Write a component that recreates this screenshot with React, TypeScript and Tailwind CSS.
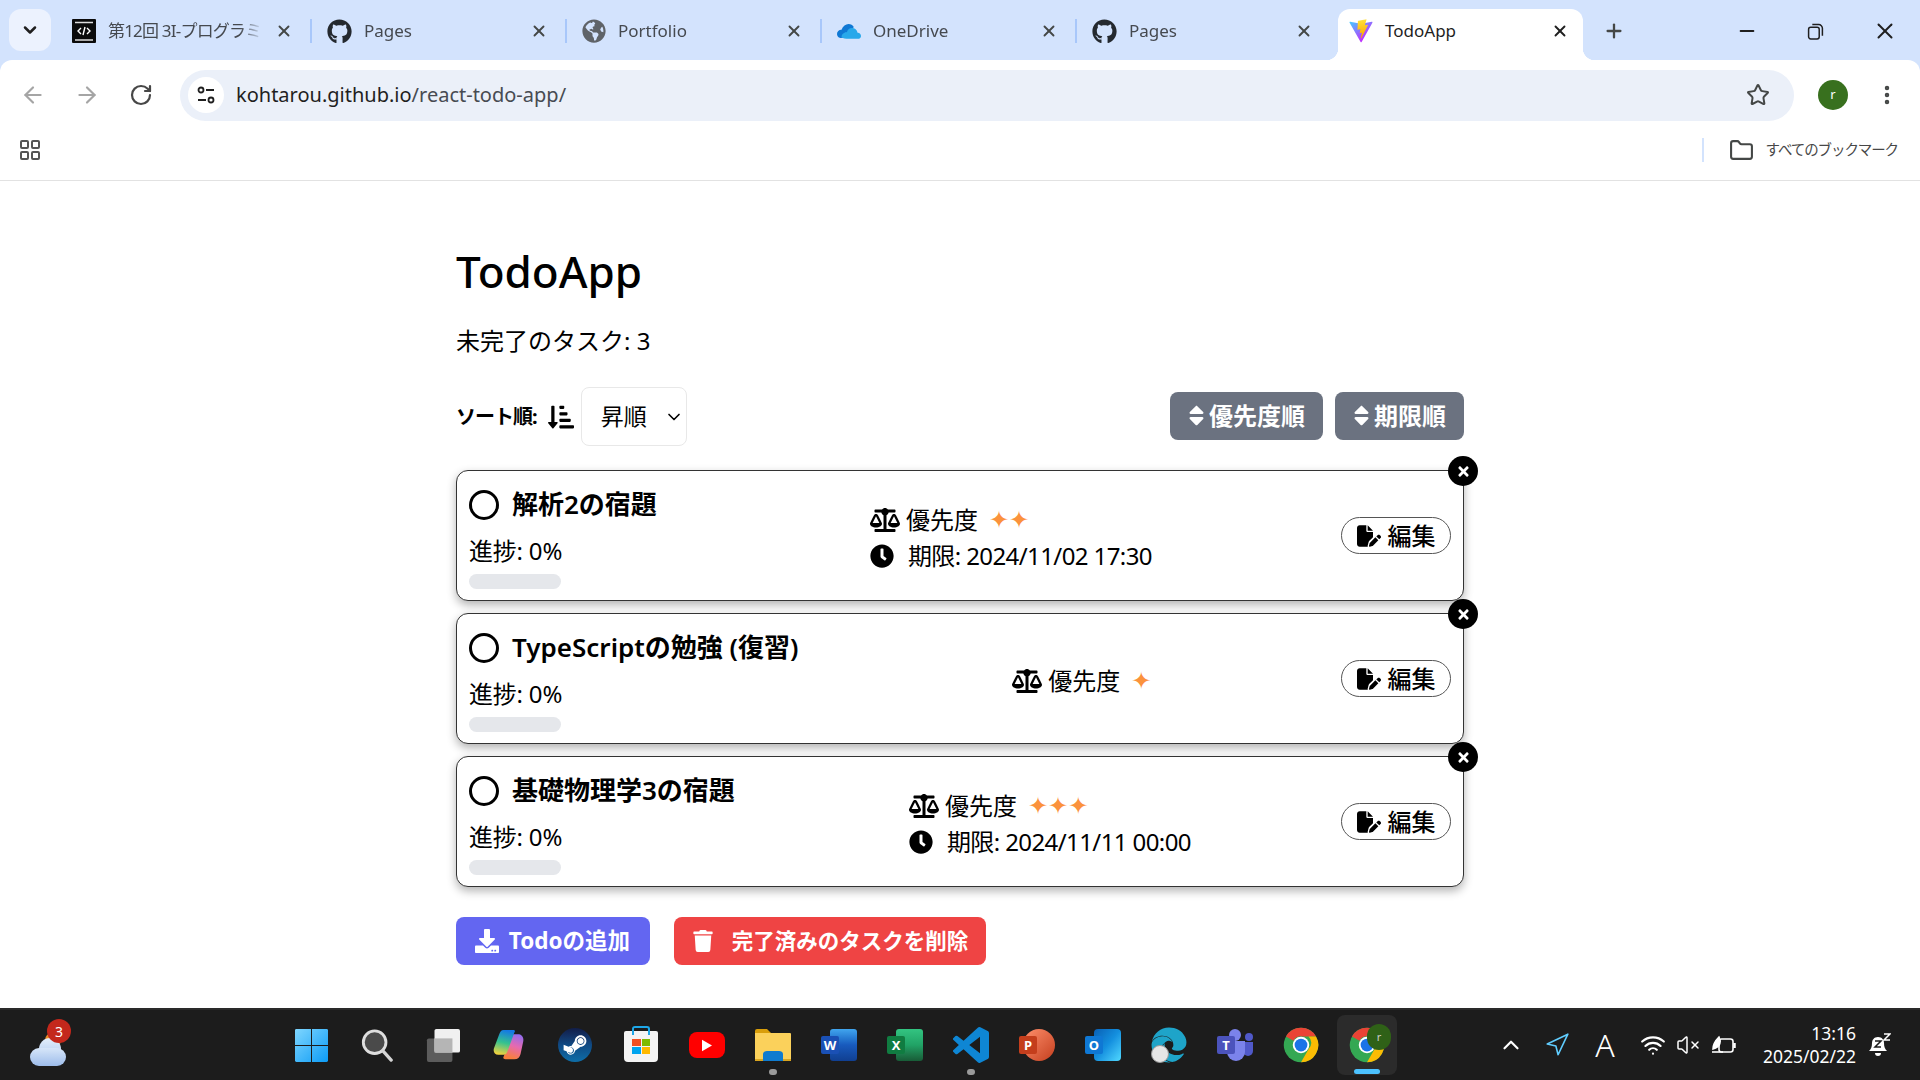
import { ArrowLeft, ArrowRight, ChevronDown, ChevronUp, EllipsisVertical, Folder, LayoutGrid, Minus, Navigation, Plus, RotateCw, Star, VolumeX, Wifi, X } from 'lucide-react';
import { FaBalanceScale, FaClock, FaDownload, FaEdge, FaGithub, FaGlobeAmericas, FaSort, FaSortAmountDownAlt, FaSteamSymbol, FaTimes, FaTrash } from 'react-icons/fa';
import { FaFilePen } from 'react-icons/fa6';
import type { ReactNode } from 'react';

const tasks = [
  { title: '解析2の宿題', stars: '✦✦', due: '期限: 2024/11/02 17:30' },
  { title: 'TypeScriptの勉強 (復習)', stars: '✦', due: '' },
  { title: '基礎物理学3の宿題', stars: '✦✦✦', due: '期限: 2024/11/11 00:00' },
];

function ViteLogo() {
  return (
    <svg viewBox="0 0 410 404" className="w-6 h-6 shrink-0">
      <defs>
        <linearGradient id="vite1" x1="6" y1="33" x2="235" y2="344" gradientUnits="userSpaceOnUse">
          <stop stopColor="#41D1FF" />
          <stop offset="1" stopColor="#BD34FE" />
        </linearGradient>
        <linearGradient id="vite2" x1="194" y1="8" x2="236" y2="293" gradientUnits="userSpaceOnUse">
          <stop stopColor="#FFEA83" />
          <stop offset="0.08" stopColor="#FFDD35" />
          <stop offset="1" stopColor="#FFA800" />
        </linearGradient>
      </defs>
      <path fill="url(#vite1)" d="M399.641 59.5246L215.643 388.545C211.844 395.338 202.084 395.378 198.228 388.618L10.5817 59.5563C6.38087 52.1896 12.6802 43.2665 21.0281 44.7586L205.223 77.6824C206.398 77.8924 207.601 77.8904 208.776 77.6763L389.119 44.8058C397.439 43.2894 403.768 52.1434 399.641 59.5246Z" />
      <path fill="url(#vite2)" d="M292.965 1.5744L156.801 28.2552C154.563 28.6937 152.906 30.5903 152.771 32.8664L144.395 174.33C144.198 177.662 147.258 180.248 150.51 179.498L188.42 170.749C191.967 169.931 195.172 173.055 194.443 176.622L183.18 231.775C182.422 235.487 185.907 238.661 189.532 237.56L212.947 230.446C216.577 229.344 220.065 232.527 219.297 236.242L201.398 322.875C200.278 328.294 207.486 331.249 210.492 326.603L212.5 323.5L323.454 102.072C325.312 98.3645 322.108 94.137 318.036 94.9228L279.014 102.454C275.347 103.161 272.227 99.746 273.262 96.1583L298.731 7.86689C299.767 4.27314 296.636 0.855181 292.965 1.5744Z" />
    </svg>
  );
}

function CodeFavicon() {
  return (
    <svg viewBox="0 0 24 24" className="w-6 h-6 shrink-0">
      <rect width="24" height="24" rx="1" fill="#0b0b0b" />
      <path d="M3 3.5h18M3 21h18" stroke="#ddd" strokeWidth="1.5" />
      <path d="M9 9l-3 3 3 3M15 9l3 3-3 3M13 8l-2 8" stroke="#fff" strokeWidth="1.4" fill="none" />
    </svg>
  );
}

function OneDriveLogo() {
  return (
    <svg viewBox="0 0 24 16" className="w-6 h-4 shrink-0">
      <path d="M9 14.5l-5.5.5C1 14.5 0 12.5 0 11c0-2.5 2-4.3 4.5-4.2C6 3.2 8.7 1 11.5 1c2.3 0 4.3 1.2 5.3 3L9 14.5z" fill="#0f78d4" />
      <path d="M9.5 15.8h11.5c1.7 0 3-1.3 3-2.9 0-1.8-1.5-3.2-3.4-3.1C20 6.7 17.8 5 15 5c-3 0-4.5 2-5 4-2 .2-5 1.5-5.5 4.5 0 1.2 2 2.3 5 2.3z" fill="#28a8ea" />
    </svg>
  );
}

function Tab({ icon, title, last }: { icon: ReactNode; title: ReactNode; last?: boolean }) {
  return (
    <div className="w-[255px] h-[42px] flex items-center pl-[15px] gap-3">
      {icon}
      <span className="flex-1 overflow-hidden whitespace-nowrap text-[17px] text-[#45494f] [mask-image:linear-gradient(to_right,black_85%,transparent)]">{title}</span>
      <X size={18} strokeWidth={2.5} className="text-[#444746] shrink-0" />
      <span className={`ml-[5px] w-[2px] h-6 shrink-0 ${last ? '' : 'bg-[#a8c7fa]'}`} />
    </div>
  );
}

function ChromeBar() {
  return (
    <header className="bg-[#d3e3fd]">
      <div className="h-[60px] flex items-end pl-[9px]">
        <div className="self-start mt-[9px] w-[42px] h-[42px] rounded-xl bg-[#ecf2fe] flex items-center justify-center mr-[6px]">
          <ChevronDown size={20} strokeWidth={3} className="text-[#1f1f1f]" />
        </div>
        <div className="flex items-center self-start mt-[10px]">
          <Tab icon={<CodeFavicon />} title={<span className="tracking-[-0.8px]">第12回 3I-プログラミング</span>} />
          <Tab icon={<FaGithub size={25} className="text-[#24292f] shrink-0" />} title="Pages" />
          <Tab icon={<FaGlobeAmericas size={24} className="text-[#5f6368] shrink-0" />} title="Portfolio" />
          <Tab icon={<OneDriveLogo />} title="OneDrive" />
          <Tab icon={<FaGithub size={25} className="text-[#24292f] shrink-0" />} title="Pages" last />
        </div>
        <div className="relative ml-[6px] w-[245px] h-[51px] bg-white rounded-t-xl flex items-center pl-[11px] pr-[14px] pb-[7px] gap-[12px]">
          <ViteLogo />
          <span className="flex-1 text-[17px] text-[#1f1f1f]">TodoApp</span>
          <X size={18} strokeWidth={2.5} className="text-[#1f1f1f]" />
          <span className="absolute -left-3 bottom-0 w-3 h-3 bg-[radial-gradient(circle_at_0_0,transparent_12px,white_12.5px)]" />
          <span className="absolute -right-3 bottom-0 w-3 h-3 bg-[radial-gradient(circle_at_100%_0,transparent_12px,white_12.5px)]" />
        </div>
        <Plus size={22} strokeWidth={2.5} className="self-start mt-[20px] ml-5 text-[#444746]" />
        <div className="ml-auto self-start mt-[18px] flex items-center text-[#1f1f1f]">
          <span className="w-[69px] flex justify-center"><Minus size={22} strokeWidth={2} /></span>
          <span className="w-[69px] flex justify-center">
            <svg viewBox="0 0 16 16" className="w-[17px] h-[17px]" fill="none" stroke="currentColor" strokeWidth="1.4">
              <rect x="1.5" y="4" width="10" height="11" rx="2" />
              <path d="M5 1.5h6a3.5 3.5 0 0 1 3.5 3.5v7" />
            </svg>
          </span>
          <span className="w-[70px] flex justify-center pr-[1px]"><X size={26} strokeWidth={1.8} /></span>
        </div>
      </div>
      <div className="bg-white rounded-t-xl">
        <div className="h-[70px] flex items-center pl-[20px]">
          <ArrowLeft size={26} strokeWidth={2} className="text-[#a5a5a5]" />
          <ArrowRight size={26} strokeWidth={2} className="ml-7 text-[#a5a5a5]" />
          <RotateCw size={24} strokeWidth={2.2} className="ml-[29px] text-[#474747]" />
          <div className="ml-[27px] h-[51px] w-[1614px] rounded-full bg-[#ebf0f9] flex items-center pl-[8px] pr-6 shrink-0">
            <span className="w-9 h-9 rounded-full bg-white flex items-center justify-center">
              <svg viewBox="0 0 20 20" className="w-5 h-5" fill="none" stroke="#1f1f1f" strokeWidth="1.8">
                <circle cx="5" cy="5" r="2.5" />
                <path d="M10 5h8M2 15h8" />
                <circle cx="15" cy="15" r="2.5" />
              </svg>
            </span>
            <span className="ml-[12px] text-[20px] text-[#1f1f1f]">
              kohtarou.github.io<span className="text-[#474b52]">/react-todo-app/</span>
            </span>
            <Star size={24} strokeWidth={2} className="ml-auto text-[#444746]" />
          </div>
          <span className="ml-6 w-[30px] h-[30px] rounded-full bg-[#38701e] text-white text-[13px] flex items-center justify-center shrink-0">r</span>
          <EllipsisVertical size={24} strokeWidth={2.5} className="ml-[27px] text-[#444746] shrink-0" />
        </div>
        <div className="h-[51px] pb-[10px] flex items-center pl-[18px] pr-[22px] border-b border-[#e2e2e2]">
          <LayoutGrid size={24} strokeWidth={2} className="text-[#555]" />
          <span className="ml-auto w-[2px] h-[24px] bg-[#d3e3fd]" />
          <Folder size={25} strokeWidth={2} className="ml-[25px] text-[#444746]" />
          <span className="ml-3 text-[14.5px] tracking-[-1.1px] text-[#474747]">すべてのブックマーク</span>
        </div>
      </div>
    </header>
  );
}

function TaskCard({ title, stars, due }: { title: string; stars: string; due: string }) {
  return (
    <div className="relative h-[131px] flex items-center justify-between px-3 bg-white border border-[#333] rounded-xl shadow-[0_4px_10px_rgba(0,0,0,0.3)]">
      <div className="pr-6 pt-[7px]">
        <div className="flex items-center gap-[13px] h-[30px]">
          <span className="w-[30px] h-[30px] rounded-full border-[3px] border-black shrink-0" />
          <span className="text-[26px] font-semibold whitespace-nowrap">{title}</span>
        </div>
        <p className="mt-[15px] h-[32px] leading-[32px] text-[24px] tracking-[-0.2px]">進捗: 0%</p>
        <div className="mt-[7px] w-[92px] h-[15px] rounded-full bg-[#e5e7eb]" />
      </div>
      <div className="mt-[4px] text-[24px]">
        <div className="h-[36px] flex items-center">
          <FaBalanceScale size={30} className="shrink-0" />
          <span className="ml-[6px]">優先度</span>
          <span className="ml-[11px] text-[#fb923c] text-[24px] [font-family:'DejaVu_Sans',sans-serif]">{stars}</span>
        </div>
        {due && (
          <div className="h-[36px] flex items-center">
            <FaClock size={24} className="shrink-0" />
            <span className="ml-[14px] whitespace-nowrap tracking-[-0.6px]">{due}</span>
          </div>
        )}
      </div>
      <button className="w-[110px] h-[37px] rounded-full border border-[#555] flex items-center justify-center gap-[7px] text-[24px] font-medium">
        <FaFilePen size={24} className="shrink-0" />
        編集
      </button>
      <span className="absolute -top-[15px] -right-[15px] w-[30px] h-[30px] rounded-full bg-black text-white flex items-center justify-center">
        <FaTimes size={15} />
      </span>
    </div>
  );
}

function TodoContent() {
  return (
    <main className="h-[827px] overflow-hidden bg-white">
      <div className="w-[1008px] mx-auto text-black">
        <h1 className="mt-[62px] h-[56px] leading-[56px] text-[44px] font-medium">TodoApp</h1>
        <p className="mt-[24px] h-[36px] leading-[36px] text-[24px]">未完了のタスク: 3</p>
        <div className="mt-[28px] h-[59px] flex items-center">
          <span className="text-[20px] font-bold tracking-[-1px]">ソート順:</span>
          <FaSortAmountDownAlt size={26} className="ml-[11px]" />
          <div className="ml-[7px] w-[106px] h-[59px] border border-[#e8e8e8] rounded-lg flex items-center pl-[19px] text-[23px]">
            昇順
            <ChevronDown size={20} strokeWidth={2} className="ml-[17px]" />
          </div>
          <button className="ml-auto mb-[2px] w-[153px] h-[48px] rounded-lg bg-[#6b7280] text-white text-[24px] font-bold flex items-center justify-center pr-[4px]">
            <FaSort size={25} />
            優先度順
          </button>
          <button className="ml-3 mb-[2px] w-[129px] h-[48px] rounded-lg bg-[#6b7280] text-white text-[24px] font-bold flex items-center justify-center pr-[4px]">
            <FaSort size={25} />
            期限順
          </button>
        </div>
        <div className="mt-[24px] flex flex-col gap-[12px]">
          {tasks.map(task => <TaskCard key={task.title} {...task} />)}
        </div>
        <div className="mt-[30px] flex gap-6">
          <button className="w-[194px] h-[48px] rounded-lg bg-[#6366f1] text-white text-[22.5px] font-bold flex items-center justify-center gap-[10px] pr-[1px]">
            <FaDownload size={24} />
            Todoの追加
          </button>
          <button className="w-[312px] h-[48px] rounded-lg bg-[#ef4444] text-white text-[21.5px] font-bold flex items-center justify-center gap-[18px]">
            <FaTrash size={22} />
            完了済みのタスクを削除
          </button>
        </div>
      </div>
    </main>
  );
}

function Tile({ bg, letter }: { bg: string; letter: string }) {
  return <span className={`absolute left-0 top-[7px] w-[18px] h-[18px] rounded-[2px] text-white text-[13px] font-bold leading-[18px] text-center ${bg}`}>{letter}</span>;
}

function ChromeLogo({ badge }: { badge?: boolean }) {
  return (
    <span className="relative w-9 h-9 flex items-center justify-center">
      <svg viewBox="0 0 48 48" className="w-9 h-9">
        <circle cx="24" cy="24" r="23" fill="#34a853" />
        <path d="M24 1a23 23 0 0 1 20 11.5H24a11.5 11.5 0 0 0-10 5.8L4 12.5A23 23 0 0 1 24 1z" fill="#ea4335" />
        <path d="M44 12.5A23 23 0 0 1 24 47l10-17.5a11.5 11.5 0 0 0 0-17z" fill="#fbbc04" />
        <circle cx="24" cy="24" r="11" fill="#fff" />
        <circle cx="24" cy="24" r="8.5" fill="#1a73e8" />
      </svg>
      {badge && <span className="absolute -top-[3px] -right-[6px] w-[24px] h-[26px] rounded-full bg-[#2f6117] text-[#ccc] text-[11px] flex items-center justify-center">r</span>}
    </span>
  );
}

const appIcons: { key: string; icon: ReactNode; dot?: boolean }[] = [
  {
    key: 'start',
    icon: (
      <svg viewBox="0 0 36 36" className="w-[35px] h-[35px]">
        <defs>
          <linearGradient id="win" x1="0" y1="0" x2="1" y2="1">
            <stop stopColor="#7fd6ff" />
            <stop offset="1" stopColor="#0c9bf5" />
          </linearGradient>
        </defs>
        <path fill="url(#win)" d="M1 2.5A1.5 1.5 0 0 1 2.5 1h15v16.5H1zM18.5 1h15A1.5 1.5 0 0 1 35 2.5v15H18.5zM1 18.5h16.5V35h-15A1.5 1.5 0 0 1 1 33.5zM18.5 18.5H35v15a1.5 1.5 0 0 1-1.5 1.5h-15z" />
      </svg>
    ),
  },
  {
    key: 'search',
    icon: (
      <svg viewBox="0 0 36 36" className="w-[34px] h-[34px]">
        <circle cx="15.5" cy="15" r="12" fill="#4a4a4a" stroke="#dedede" strokeWidth="3" />
        <path d="M24 24l9 10" stroke="#d5d5d5" strokeWidth="3.5" strokeLinecap="round" />
      </svg>
    ),
  },
  {
    key: 'view',
    icon: (
      <svg viewBox="0 0 36 36" className="w-[36px] h-[34px]">
        <rect x="1" y="11" width="27" height="25" rx="2" fill="#5c5c5c" />
        <rect x="9" y="1" width="27" height="25" rx="2" fill="#f0f0f0" />
        <rect x="9" y="11" width="19" height="15" fill="#b5b5b5" />
      </svg>
    ),
  },
  {
    key: 'copilot',
    icon: (
      <svg viewBox="0 0 36 36" className="w-[34px] h-[32px]">
        <defs>
          <linearGradient id="cop1" x1="0.5" y1="0" x2="0.3" y2="1">
            <stop stopColor="#1479e4" />
            <stop offset="0.5" stopColor="#35c28f" />
            <stop offset="1" stopColor="#f6d33c" />
          </linearGradient>
          <linearGradient id="cop2" x1="0.8" y1="0" x2="0.5" y2="1">
            <stop stopColor="#8f6cf0" />
            <stop offset="0.5" stopColor="#e66ab0" />
            <stop offset="1" stopColor="#f8803c" />
          </linearGradient>
        </defs>
        <path fill="url(#cop2)" d="M24 6h4c4 0 7 3 6 8l-3 14c-1 4-3 6-7 6H14c-2 0-3-1-2-3l9-24c.5-1 2-1 3-1z" />
        <path fill="url(#cop1)" d="M12 1h11c2 0 2 2 1 3l-8 22c-1 2-2 3-4 3H6c-4 0-6-3-5-7L7 6c1-3 2-5 5-5z" />
      </svg>
    ),
  },
  {
    key: 'steam',
    icon: (
      <span className="w-[34px] h-[34px] rounded-full bg-gradient-to-b from-[#111d48] via-[#0f4a84] to-[#0e6ea8] flex items-center justify-center overflow-hidden">
        <FaSteamSymbol size={26} className="text-white" />
      </span>
    ),
  },
  {
    key: 'store',
    icon: (
      <span className="relative w-[34px] h-[31px] mt-[3px] rounded-b-[4px] rounded-t-[2px] bg-[#f4f4f4] grid grid-cols-2 gap-[1px] p-[8px]">
        <span className="bg-[#f25022]" />
        <span className="bg-[#7fba00]" />
        <span className="bg-[#00a4ef]" />
        <span className="bg-[#ffb900]" />
        <span className="absolute -top-[5px] left-[8px] w-[18px] h-[9px] border-2 border-b-0 border-[#1da7e8] rounded-t-[3px]" />
      </span>
    ),
  },
  {
    key: 'youtube',
    icon: (
      <span className="w-9 h-[26px] rounded-[8px] bg-[#f00] flex items-center justify-center">
        <svg viewBox="0 0 12 14" className="w-[10px] h-[13px]"><path d="M0 0l12 7-12 7z" fill="#fff" /></svg>
      </span>
    ),
  },
  {
    key: 'explorer',
    dot: true,
    icon: (
      <svg viewBox="0 0 36 32" className="w-9 h-8">
        <path d="M0 2a2 2 0 0 1 2-2h10l4 4h-16z" fill="#d99e0a" />
        <path d="M0 4h35a1 1 0 0 1 1 1v27H0z" fill="#fbd15b" />
        <path d="M0 30h36v2H0z" fill="#d9a520" />
        <path d="M8 32V25c0-2 2-3 4-3h12c2 0 4 1 4 3v7z" fill="#0f7bcf" />
      </svg>
    ),
  },
  {
    key: 'word',
    icon: (
      <span className="relative w-9 h-8 block">
        <span className="absolute right-0 top-0 w-[27px] h-8 rounded-[3px] bg-gradient-to-b from-[#41a5ee] via-[#185abd] to-[#103f91]" />
        <Tile bg="bg-[#1a50b5]" letter="W" />
      </span>
    ),
  },
  {
    key: 'excel',
    icon: (
      <span className="relative w-9 h-8 block">
        <span className="absolute right-0 top-0 w-[27px] h-8 rounded-[3px] bg-gradient-to-b from-[#33c481] via-[#21a366] to-[#185c37]" />
        <Tile bg="bg-[#107c41]" letter="X" />
      </span>
    ),
  },
  {
    key: 'vscode',
    dot: true,
    icon: (
      <svg viewBox="0 0 24 24" className="w-9 h-9">
        <path fill="#0e86d4" d="M23.15 2.587L18.21.21a1.494 1.494 0 0 0-1.705.29l-9.46 8.63-4.12-3.128a.999.999 0 0 0-1.276.057L.327 7.261A1 1 0 0 0 .326 8.74L3.899 12 .326 15.26a1 1 0 0 0 .001 1.479L1.65 17.94a.999.999 0 0 0 1.276.057l4.12-3.128 9.46 8.63a1.492 1.492 0 0 0 1.704.29l4.942-2.377A1.5 1.5 0 0 0 24 20.06V3.939a1.5 1.5 0 0 0-.85-1.352zm-5.146 14.861L10.826 12l7.178-5.448v10.896z" />
      </svg>
    ),
  },
  {
    key: 'ppt',
    icon: (
      <span className="relative w-9 h-8 block">
        <span className="absolute right-0 top-0 w-[32px] h-8 rounded-full bg-gradient-to-br from-[#ff8f6b] to-[#c43e1c]" />
        <Tile bg="bg-[#c43e1c]" letter="P" />
      </span>
    ),
  },
  {
    key: 'outlook',
    icon: (
      <span className="relative w-9 h-8 block">
        <span className="absolute right-0 top-0 w-[27px] h-8 rounded-[4px] bg-gradient-to-br from-[#0a5fb5] via-[#1490df] to-[#50d9ff]" />
        <Tile bg="bg-[#0f78d4]" letter="O" />
      </span>
    ),
  },
  {
    key: 'edge',
    icon: (
      <span className="relative w-9 h-9 flex items-center justify-center">
        <FaEdge size={36} className="text-[#1ea4c9]" />
        <span className="absolute left-0 bottom-0 w-[18px] h-[18px] rounded-full bg-[#e6e6e6] border border-[#999]" />
      </span>
    ),
  },
  {
    key: 'teams',
    icon: (
      <span className="relative w-9 h-8 block">
        <span className="absolute right-0 top-[4px] w-[8px] h-[8px] rounded-full bg-[#5059c9]" />
        <span className="absolute left-[12px] top-0 w-[12px] h-[12px] rounded-full bg-[#7b83eb]" />
        <span className="absolute right-0 top-[13px] w-[10px] h-[14px] rounded-b-[5px] bg-[#5059c9]" />
        <span className="absolute left-[10px] top-[12px] w-[18px] h-[20px] rounded-b-[9px] bg-[#7b83eb]" />
        <Tile bg="bg-[#4b53bc]" letter="T" />
      </span>
    ),
  },
  { key: 'chrome', icon: <ChromeLogo /> },
];

function WeatherIcon() {
  return (
    <span className="relative block w-[36px] h-[28px] ml-[30px] mt-[14px]">
      <span className="absolute left-[15px] top-[-5px] w-[16px] h-[14px] rounded-full bg-[#e98a24]" />
      <span className="absolute left-[9px] top-0 w-[22px] h-[22px] rounded-full bg-gradient-to-b from-[#e5effb] to-[#a9c6ef]" />
      <span className="absolute left-0 top-[10px] w-[36px] h-[18px] rounded-[9px] bg-gradient-to-b from-[#d7e6f9] to-[#9dbcea]" />
      <span className="absolute left-[17px] top-[-19px] w-[24px] h-[24px] rounded-full bg-[#c4281c] text-white text-[14px] flex items-center justify-center">3</span>
    </span>
  );
}

function Taskbar() {
  return (
    <footer className="h-[72px] flex items-center bg-[#1c1c1c] border-t-2 border-[#2a2a2a] text-white">
      <div className="w-[278px] self-stretch flex items-center">
        <WeatherIcon />
      </div>
      <div className="flex items-center">
        {appIcons.map(app => (
          <div key={app.key} className="relative w-[66px] h-[70px] flex items-center justify-center">
            {app.icon}
            {app.dot && <span className="absolute bottom-[5px] w-[8px] h-[6px] rounded-full bg-[#9a9a9a]" />}
          </div>
        ))}
        <div className="relative w-[60px] h-[60px] ml-[3px] rounded-lg bg-[#2b2b2b] flex items-center justify-center">
          <ChromeLogo badge />
          <span className="absolute bottom-[1px] left-[17px] w-[26px] h-[5px] rounded-full bg-[#4cc2ff]" />
        </div>
      </div>
      <div className="flex-1 flex items-center">
        <ChevronUp size={26} strokeWidth={2} className="ml-[101px]" />
        <Navigation size={26} strokeWidth={1.5} className="ml-[20px] text-[#60cdff]" />
        <span className="ml-[23px] w-6 text-center text-[32px] font-light leading-none">A</span>
        <Wifi size={26} strokeWidth={2} className="ml-[23px]" />
        <VolumeX size={24} strokeWidth={1.5} className="ml-[10px]" />
        <svg viewBox="0 0 26 24" className="ml-[11px] w-[26px] h-6" fill="none" stroke="#fff" strokeWidth="1.6">
          <rect x="8" y="6" width="14" height="13" rx="2.5" />
          <path d="M23.5 10v5" strokeWidth="2.5" />
          <path d="M1 19h11" />
          <path d="M2 16c0-5 2-8 6-12 2 4 2 10-6 12z" fill="#fff" />
        </svg>
        <div className="ml-auto mr-[11px] text-right text-[17.5px] leading-[23px]">
          <div>13:16</div>
          <div>2025/02/22</div>
        </div>
        <svg viewBox="0 0 24 24" className="mr-[29px] w-[24px] h-[24px]" fill="#fff">
          <path d="M11 4c-4 0-6 3-6 6 0 4-1 6-3 8h18c-2-2-3-4-3-8 0-3-2-6-6-6zM8 20a3 3 0 0 0 6 0z" />
          <path d="M8 8h6l-6 6h6" fill="none" stroke="#1c1c1c" strokeWidth="1.5" />
          <path d="M17 1h6l-6 6h6" fill="none" stroke="#fff" strokeWidth="1.5" />
        </svg>
      </div>
    </footer>
  );
}

export default function App() {
  return (
    <div className="w-[1920px] h-[1080px] overflow-hidden [font-family:'Noto_Sans','Noto_Sans_CJK_JP',sans-serif]">
      <ChromeBar />
      <TodoContent />
      <Taskbar />
    </div>
  );
}
